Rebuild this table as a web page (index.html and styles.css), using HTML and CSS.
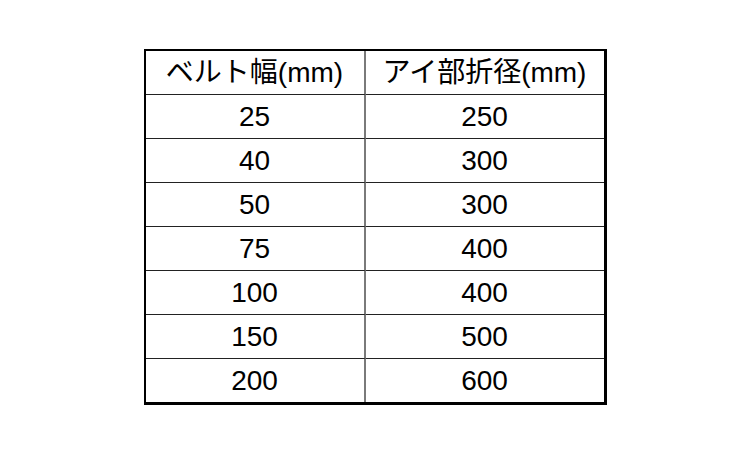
FILE: index.html
```html
<!DOCTYPE html>
<html lang="ja">
<head>
<meta charset="utf-8">
<link rel="stylesheet" href="styles.css">
</head>
<body>
<div class="table">
  <div class="cell left">ベルト幅(mm)</div><div class="cell">アイ部折径(mm)</div>
  <div class="cell left">25</div><div class="cell">250</div>
  <div class="cell left">40</div><div class="cell">300</div>
  <div class="cell left">50</div><div class="cell">300</div>
  <div class="cell left">75</div><div class="cell">400</div>
  <div class="cell left">100</div><div class="cell">400</div>
  <div class="cell left">150</div><div class="cell">500</div>
  <div class="cell left last">200</div><div class="cell last">600</div>
</div>
</body>
</html>
```
FILE: styles.css
```css
html, body {
  margin: 0;
  padding: 0;
  background: #fff;
}
body {
  width: 750px;
  height: 450px;
  overflow: hidden;
  padding-top: 49px;
  box-sizing: border-box;
}
.table {
  width: 463px;
  box-sizing: border-box;
  margin: 0 auto;
  border-top: 2px solid #000;
  border-left: 2px solid #000;
  border-right: 3px solid #000;
  border-bottom: 3px solid #000;
  display: grid;
  grid-template-columns: 220px 1fr;
  font-family: "Liberation Sans", "Noto Sans CJK JP", sans-serif;
  font-size: 28px;
  color: #000;
}
.cell {
  height: 43px;
  display: flex;
  align-items: center;
  justify-content: center;
  border-bottom: 1px solid #222;
  line-height: 1;
}
.cell.left {
  border-right: 2px solid #7a7a7a;
}
.cell.last {
  border-bottom: none;
}
```
